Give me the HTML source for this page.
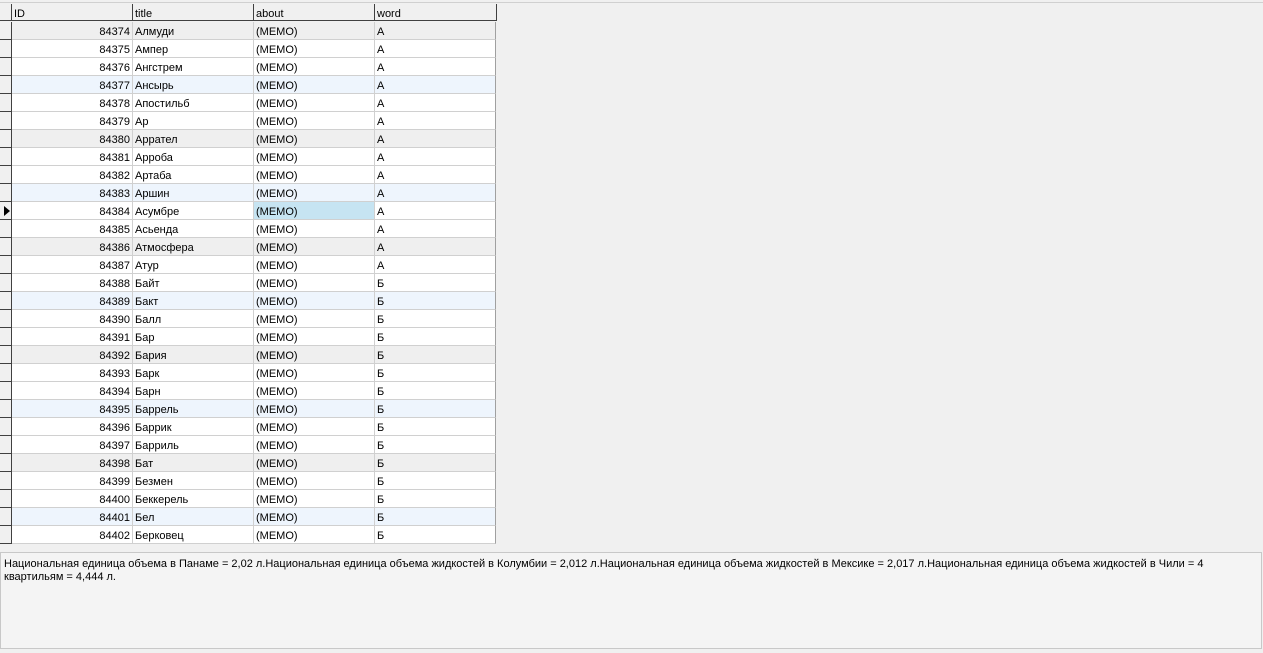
<!DOCTYPE html>
<html><head><meta charset="utf-8"><style>
body{margin:0;width:1263px;height:653px;background:#f0f0f0;font:11px "Liberation Sans","DejaVu Sans",sans-serif;color:#000;position:relative;overflow:hidden}
.top{position:absolute;left:0;top:2px;width:1263px;height:1px;background:#d0d0d0}
.hdr{position:absolute;top:4px;height:17px;background:#f0f0f0;border-bottom:1px solid #404040;border-right:1px solid #404040;box-sizing:border-box;line-height:17px;padding-left:2px;padding-top:2px}
.r{position:absolute;left:0;height:18px;width:497px}
.ind{position:absolute;left:0;top:0;width:12px;height:18px;background:#f0f0f0;box-sizing:border-box;border-right:1px solid #404040;border-bottom:1px solid #404040}
.c{position:absolute;top:0;height:18px;box-sizing:border-box;border-right:1px solid #d0d0d0;border-bottom:1px solid #d0d0d0;line-height:17px;padding-left:2px;padding-top:2px;white-space:nowrap;overflow:hidden}
.id{left:12px;width:121px;text-align:right;padding-right:2px}
.t{left:133px;width:121px}.a{left:254px;width:121px}.w{left:375px;width:121px;border-right:1px solid #a0a0a0}
.g .c{background:#efefef}.b .c{background:#eef5fd}.wh .c{background:#fff}
.memo{position:absolute;left:0;top:552px;width:1262px;height:97px;box-sizing:border-box;border:1px solid #c8c8c8;background:#f4f4f4;padding:5px 3px;line-height:13px}
</style></head><body>
<div class="top"></div>
<div class="hdr" style="left:0;width:12px;padding:0"></div>
<div class="hdr" style="left:12px;width:121px">ID</div>
<div class="hdr" style="left:133px;width:121px">title</div>
<div class="hdr" style="left:254px;width:121px">about</div>
<div class="hdr" style="left:375px;width:122px">word</div>
<div id="rows"></div>
<script>
var t=["Алмуди","Ампер","Ангстрем","Ансырь","Апостильб","Ар","Аррател","Арроба","Артаба","Аршин","Асумбре","Асьенда","Атмосфера","Атур","Байт","Бакт","Балл","Бар","Бария","Барк","Барн","Баррель","Баррик","Барриль","Бат","Безмен","Беккерель","Бел","Берковец"];
var h="";
for(var i=0;i<t.length;i++){var m=i%6,cl=m==0?"g":(m==3?"b":"wh");var w=i<14?"А":"Б";
h+='<div class="r '+cl+'" style="top:'+(22+i*18)+'px"><div class="ind">'+(i==10?'<svg width="11" height="17" style="position:absolute;left:2px;top:0"><path d="M2 4 L8 9 L2 14Z" fill="#000"/></svg>':'')+'</div><div class="c id">'+(84374+i)+'</div><div class="c t">'+t[i]+'</div><div class="c a"'+(i==10?' style="background:#c6e4f2"':'')+'>(MEMO)</div><div class="c w">'+w+'</div></div>';}
document.getElementById("rows").innerHTML=h;
</script>
<div class="memo">Национальная единица объема в Панаме = 2,02 л.Национальная единица объема жидкостей в Колумбии = 2,012 л.Национальная единица объема жидкостей в Мексике = 2,017 л.Национальная единица объема жидкостей в Чили = 4<br>квартильям = 4,444 л.</div>
</body></html>
